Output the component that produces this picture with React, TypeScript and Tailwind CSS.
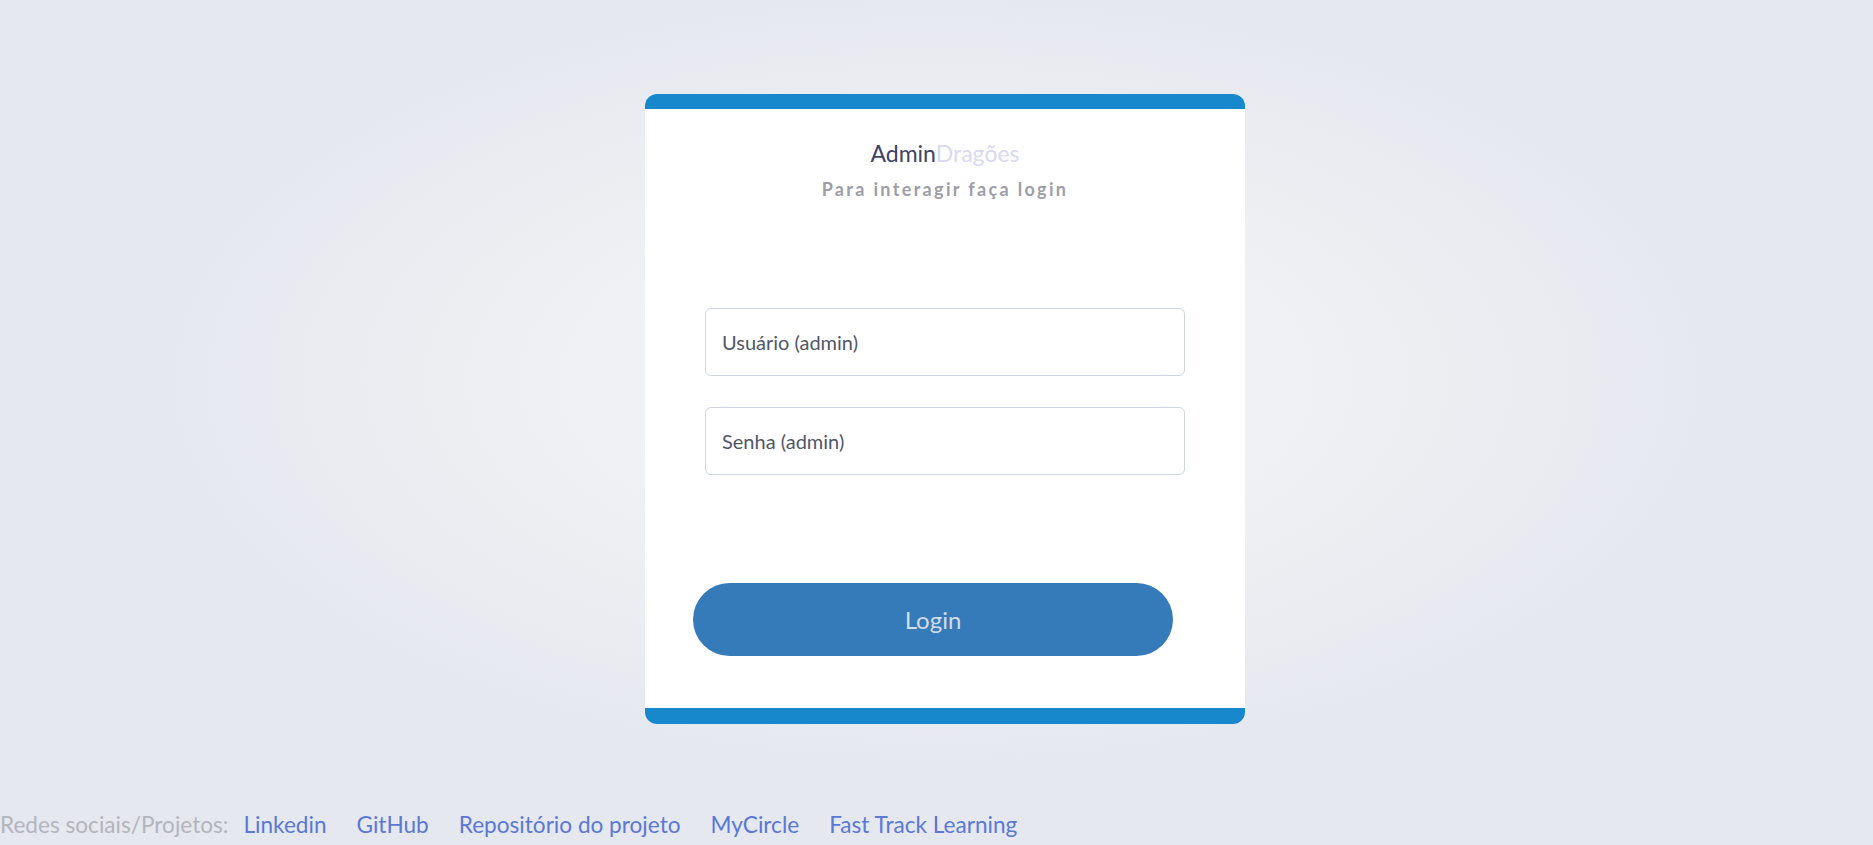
export default function App() {
  const links = ["Linkedin", "GitHub", "Repositório do projeto", "MyCircle", "Fast Track Learning"];

  return (
    <div
      className="h-screen w-full overflow-hidden flex flex-col bg-[radial-gradient(ellipse_at_50%_45%,#f3f4f6_0%,#eef0f3_30%,#e5e8ef_60%)]"
      style={{ fontFamily: "Lato, 'Open Sans', sans-serif" }}
    >
      <main className="flex justify-center pt-[94px] pl-[17px]">
        <div className="w-[600px] bg-white rounded-[12px] overflow-hidden flex flex-col">
          <div className="h-[15px] bg-[#1788cc]" />

          <div className="flex flex-col items-center">
            <h1 className="mt-[31px] text-[23px] leading-[27px] text-[#3d4466]">
              Admin<span className="text-[#d9d9ef]">Dragões</span>
            </h1>
            <p className="mt-[11px] text-[18px] leading-[22px] font-bold tracking-[0.13em] text-[#9d9ea8]">
              Para interagir faça login
            </p>
          </div>

          <form className="flex flex-col" onSubmit={(e) => e.preventDefault()}>
            <div className="mt-[108px] flex flex-col gap-[31px] px-[60px]">
              <input
                type="text"
                placeholder="Usuário (admin)"
                className="h-[68px] w-full rounded-[6px] border border-[#cfd6e2] px-[16px] text-[20px] text-[#505769] placeholder:text-[#505769] outline-none"
              />
              <input
                type="password"
                placeholder="Senha (admin)"
                className="h-[68px] w-full rounded-[6px] border border-[#cfd6e2] px-[16px] text-[20px] text-[#505769] placeholder:text-[#505769] outline-none"
              />
            </div>

            <div className="mt-[108px] pl-[48px]">
              <button
                type="submit"
                className="h-[73px] w-[480px] rounded-full bg-[#357bb9] text-[24px] text-[#d4dce6]"
              >
                Login
              </button>
            </div>
          </form>

          <div className="mt-[52px] h-[16px] bg-[#1788cc]" />
        </div>
      </main>

      <footer className="mt-[88px] flex items-center text-[22.6px] leading-[26px]">
        <span className="text-[#b3b5bd]">Redes sociais/Projetos:</span>
        <nav className="flex gap-[30px] ml-[15px]">
          {links.map((l) => (
            <a key={l} href="#" className="text-[#5b78d4]">
              {l}
            </a>
          ))}
        </nav>
      </footer>
    </div>
  );
}
